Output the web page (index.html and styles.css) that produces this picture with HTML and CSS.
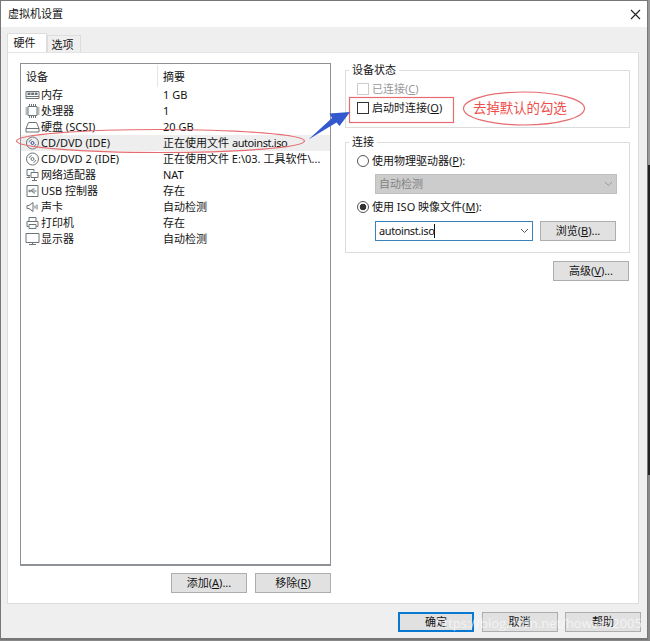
FILE: index.html
```html
<!DOCTYPE html>
<html lang="zh-CN">
<head>
<meta charset="utf-8">
<title>虚拟机设置</title>
<link rel="stylesheet" href="styles.css">
</head>
<body>
<div class="window">
  <header class="titlebar">
    <span>虚拟机设置</span>
    <svg class="close" width="11" height="11" viewBox="0 0 11 11"><path d="M1 1l9 9M10 1l-9 9" stroke="#222" stroke-width="1.1"/></svg>
  </header>
  <nav class="tabs"><div class="tab active">硬件</div><div class="tab">选项</div></nav>
  <main class="page">
    <section class="left">
      <div class="list">
        <div class="row head"><span class="name">设备</span><span class="sum">摘要</span></div>
        <div class="row"><svg class="ico" viewBox="0 0 14 14"><path d="M.5 3.500h13v7H.5zM.5 8.500h13" /><path d="M2 4.500h3v2.500H2zM5.700 4.500h3v2.500h-3zM9.400 4.500H12v2.500H9.400z" class="fill"/></svg><span class="name">内存</span><span class="sum">1 GB</span></div>
        <div class="row"><svg class="ico" viewBox="0 0 14 14"><path d="M2.500 2.500h9v9h-9z"/><path d="M4 0v2M6 0v2M8 0v2M10 0v2M4 12v2M6 12v2M8 12v2M10 12v2M0 4h2M0 6h2M0 8h2M0 10h2M12 4h2M12 6h2M12 8h2M12 10h2"/></svg><span class="name">处理器</span><span class="sum">1</span></div>
        <div class="row"><svg class="ico" viewBox="0 0 14 14"><path d="M3 2.500h8l2.500 6v3.500H.5V8.500zM.5 8.500h13"/></svg><span class="name">硬盘 (SCSI)</span><span class="sum">20 GB</span></div>
        <div class="row selected"><svg class="ico" viewBox="0 0 14 14"><circle cx="7" cy="7" r="6"/><circle cx="7" cy="7" r="1.500" class="blue"/><path d="M3.500 6A4 4 0 0 1 6 3.500M10.500 8A4 4 0 0 1 8 10.500"/></svg><span class="name">CD/DVD (IDE)</span><span class="sum">正在使用文件 <i class="file">autoinst.iso</i></span></div>
        <div class="row"><svg class="ico" viewBox="0 0 14 14"><circle cx="7" cy="7" r="6"/><circle cx="7" cy="7" r="1.500"/><path d="M3.500 6A4 4 0 0 1 6 3.500M10.500 8A4 4 0 0 1 8 10.500"/></svg><span class="name">CD/DVD 2 (IDE)</span><span class="sum">正在使用文件 E:\03. 工具软件\...</span></div>
        <div class="row"><svg class="ico" viewBox="0 0 14 14"><path d="M4.500 7.500H1.500v-6h7v2M1 9.500h3.500M3.500 7.500v2M5.500 4.500h7v5h-7zM9 9.500v3M6.500 12.500h5"/></svg><span class="name">网络适配器</span><span class="sum">NAT</span></div>
        <div class="row"><svg class="ico" viewBox="0 0 14 14"><path d="M1.500 1.500h11v11h-11zM4 7h7M5.500 7l1.500-2h2M6.500 7l1.500 2h1.500"/><circle cx="4" cy="7" r=".8"/></svg><span class="name">USB 控制器</span><span class="sum">存在</span></div>
        <div class="row"><svg class="ico" viewBox="0 0 14 14"><path d="M1.500 5.500h2L7.500 2.500v9l-4-3h-2zM9.500 5.500v3M11.500 4.500v5"/></svg><span class="name">声卡</span><span class="sum">自动检测</span></div>
        <div class="row"><svg class="ico" viewBox="0 0 14 14"><path d="M3.500 5V1.500h7V5M3 10.500H1.500v-5h11v5H11M3.500 8.500h7v4h-7z"/></svg><span class="name">打印机</span><span class="sum">存在</span></div>
        <div class="row"><svg class="ico" viewBox="0 0 14 14"><path d="M.5 1.500h13v9H.5zM7 10.500v2M3.500 12.500h7"/></svg><span class="name">显示器</span><span class="sum">自动检测</span></div>
      </div>
      <div class="actions"><button>添加(<u>A</u>)...</button><button>移除(<u>R</u>)</button></div>
    </section>
    <section class="right">
      <fieldset class="state"><legend>设备状态</legend>
        <label class="option disabled"><span class="box"></span>已连接(<u>C</u>)</label>
        <label class="option"><span class="box"></span>启动时连接(<u>O</u>)</label>
      </fieldset>
      <fieldset class="connection"><legend>连接</legend>
        <label class="option"><span class="radio"></span>使用物理驱动器(<u>P</u>):</label>
        <div class="select off">自动检测<svg width="9" height="6" viewBox="0 0 9 6"><path d="M1 1l3.500 3.500L8 1"/></svg></div>
        <label class="option"><span class="radio checked"></span>使用 ISO 映像文件(<u>M</u>):</label>
        <div class="pick"><div class="select"><span class="value">autoinst.iso</span><svg width="9" height="6" viewBox="0 0 9 6"><path d="M1 1l3.500 3.500L8 1"/></svg></div><button>浏览(<u>B</u>)...</button></div>
      </fieldset>
      <button class="advanced">高级(<u>V</u>)...</button>
    </section>
  </main>
  <footer><button class="primary">确定</button><button>取消</button><button>帮助</button></footer>
</div>
<svg class="marks" width="650" height="641" viewBox="0 0 650 641">
  <ellipse cx="160.500" cy="141" rx="144" ry="11.500"/>
  <rect x="349.500" y="97.500" width="104" height="25"/>
  <ellipse cx="524" cy="108.500" rx="60.500" ry="16.500"/>
  <path class="arrow" d="M308.500 139.500L332 118l-2.500-4.500L350 112l-10.500 14-3-3.500z"/>
</svg>
<div class="note">去掉默认的勾选</div>
<div class="watermark">https://blog.csdn.net/howard2005</div>
</body>
</html>
```
FILE: styles.css
```css
*{box-sizing:border-box}
body{margin:0;width:650px;height:641px;overflow:hidden;background:linear-gradient(#999 0 165px,#222 165px 475px,#888 475px);font:11px/16px "Noto Sans","Noto Sans CJK SC",sans-serif;color:#141414}
.window{width:648px;height:640px;background:#efefef;border:1px solid #777;border-bottom-width:2px;display:flex;flex-direction:column}
.titlebar{height:26px;flex:none;background:#fff;display:flex;align-items:center;justify-content:space-between;padding:0 6px 0 7px}
.tabs{height:25px;flex:none;display:flex;align-items:flex-end;padding:0 0 0 6px}
.tab{height:17px;width:34px;border:1px solid #ddd;border-bottom:0;text-align:center;line-height:18px;padding-right:3px}
.tab.active{height:19px;width:40px;background:#fff;padding-right:5px}
.page{height:552px;flex:none;width:632px;margin-left:6px;background:#fff;border:1px solid #dcdcdc;border-top-color:#e4e4e4;display:flex}
.left{padding:10px 0 0 12px;width:324px}
.list{width:311px;height:503px;border:1px solid #8e9297;border-width:1px 1px 2px 1px}
.row{height:16px;display:flex;align-items:center;white-space:nowrap;padding-left:4px}
.row .name{width:123px;padding-left:1px}
.row.head{height:23px}
.row.head .name{width:133px;border-right:1px solid #e5e5e5;height:22px;line-height:23px}
.row.head .sum{padding-left:5px;line-height:23px;height:22px}
.selected{background:#eee}
.ico{width:15px;height:14px;flex:none;fill:none;stroke:#6b7479;stroke-width:1}
.ico .fill{fill:#6b7479;stroke:none}
.ico .blue{stroke:#349}
.file{font-style:normal;letter-spacing:-.4px}
button{height:20px;width:76px;padding:0;border:1px solid #adadad;background:#e1e1e1;font:inherit;line-height:18px;color:inherit}
.actions{display:flex;justify-content:flex-end;gap:8px;margin-top:7px;padding-right:1px}
.right{width:285px;margin-left:13px;padding-top:10px}
fieldset{margin:0;padding:2px 0 0 11px;border:1px solid #dcdcdc;min-width:0}
legend{padding:0 3px;margin-left:-8px;height:14px;line-height:14px}
.state{height:65px}
.connection{height:118px;margin-top:7px}
.option{height:19px;display:flex;align-items:center;white-space:pre}
.option.disabled{color:#999}
.box{width:12px;height:12px;border:1px solid #333;margin-right:3px}
.disabled .box{border-color:#ccc}
.radio{width:12px;height:12px;border:1px solid #555;border-radius:50%;margin-right:3px}
.radio.checked{background:radial-gradient(circle,#333 0 3px,transparent 3.600px)}
.select{width:158px;height:20px;border:1px solid #3883bd;background:#fff;display:flex;align-items:center;justify-content:space-between;padding:0 3px}
.select svg{fill:none;stroke:#555}
.select.off{width:242px;margin:4px 0 3px 18px;background:#ccc;border-color:#bfbfbf;color:#838383}
.off svg{stroke:#999}
.value{border-right:1px solid #111;line-height:14px;letter-spacing:-.4px}
.pick{display:flex;gap:7px;margin:5px 0 0 18px}
.advanced{display:block;margin:8px 0 0 208px}
footer{display:flex;justify-content:flex-end;gap:7.500px;padding:8px 6px 0 0}
.primary{border:2px solid #0878d0;line-height:16px}
.marks{position:absolute;left:0;top:0;fill:none;stroke:#e66c70;stroke-width:1.200}
.arrow{fill:#3459cf;stroke:none}
.note{position:absolute;left:473px;top:98px;color:#ee4e49;font-size:13.400px;line-height:20px}
.watermark{position:absolute;right:8px;top:613px;font:13px/20px "Open Sans",sans-serif;color:rgba(255,255,255,.65)}
```
